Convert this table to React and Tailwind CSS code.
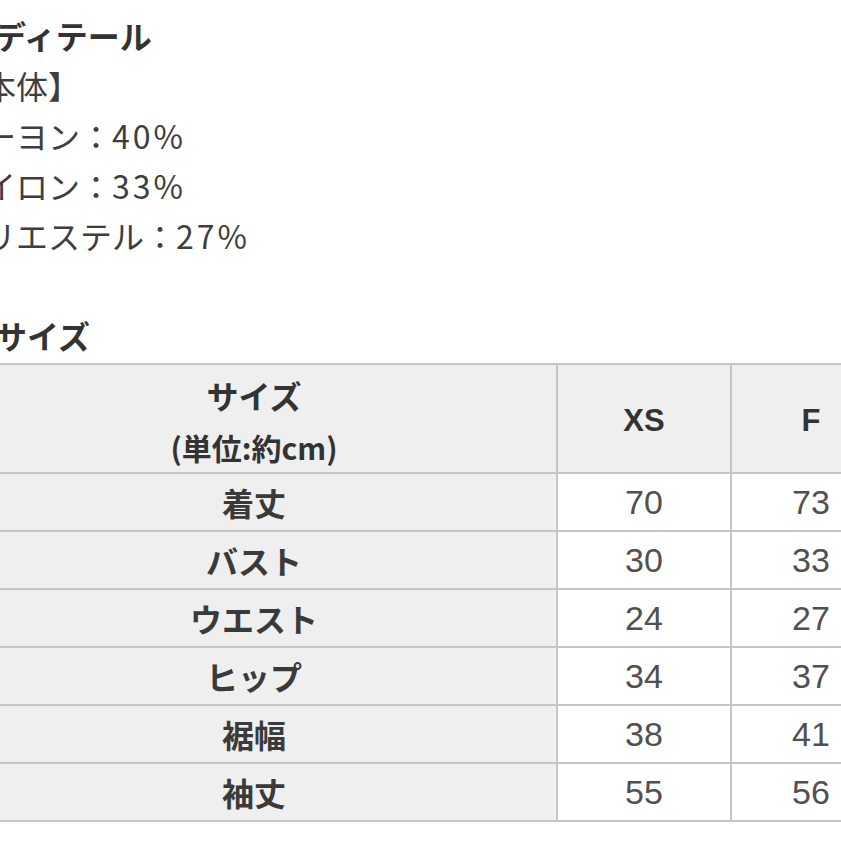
import React from "react";

const rows = [
  { label: "着丈", xs: "70", f: "73" },
  { label: "バスト", xs: "30", f: "33" },
  { label: "ウエスト", xs: "24", f: "27" },
  { label: "ヒップ", xs: "34", f: "37" },
  { label: "裾幅", xs: "38", f: "41" },
  { label: "袖丈", xs: "55", f: "56" },
];

const materials = [
  { name: "レーヨン", pct: "40%" },
  { name: "ナイロン", pct: "33%" },
  { name: "ポリエステル", pct: "27%" },
];

const cell = "flex items-center justify-center border-r-2 border-b-2 border-[#c6c6c6]";

export default function App() {
  return (
    <div className="w-[841px] h-[841px] overflow-hidden bg-white font-['Noto_Sans_CJK_JP',sans-serif] text-[#3e3e3e]">
      <div className="pt-[10px] text-[32px] leading-[50px] whitespace-nowrap">
        <p className="font-bold -ml-[6px] text-[#333]">ディテール</p>
        <p className="-ml-[48px]">【本体】</p>
        {materials.map((m) => (
          <p key={m.name} className="-ml-[48px]">
            {m.name}：<span className="tracking-[3px]">{m.pct}</span>
          </p>
        ))}
        <p className="h-[50px]"></p>
        <p className="font-bold -ml-[5px] text-[#333] h-[53px]">サイズ</p>
      </div>

      {/* size table */}
      <div className="-ml-[48px] w-[940px] grid grid-cols-[606px_174px_160px] border-t-2 border-[#c6c6c6] text-[32px]">
        <div className={`${cell} h-[109px] bg-[#efefef] flex-col font-bold text-[#333] leading-[52px] pt-[4px]`}>
          <span>サイズ</span>
          <span className="text-[30px]">(単位:約cm)</span>
        </div>
        <div className={`${cell} h-[109px] bg-[#efefef] font-bold text-[#333] font-['Liberation_Sans',sans-serif] text-[31px] pt-[6px]`}>XS</div>
        <div className={`${cell} h-[109px] bg-[#efefef] font-bold text-[#333] font-['Liberation_Sans',sans-serif] text-[31px] pt-[6px]`}>F</div>

        {rows.map((r) => (
          <React.Fragment key={r.label}>
            <div className={`${cell} h-[58px] bg-[#efefef] font-bold text-[#3a3a3a]`}>{r.label}</div>
            <div className={`${cell} h-[58px] bg-white text-[#505050] font-['Liberation_Sans',sans-serif] text-[34px]`}>{r.xs}</div>
            <div className={`${cell} h-[58px] bg-white text-[#505050] font-['Liberation_Sans',sans-serif] text-[34px]`}>{r.f}</div>
          </React.Fragment>
        ))}
      </div>
    </div>
  );
}
